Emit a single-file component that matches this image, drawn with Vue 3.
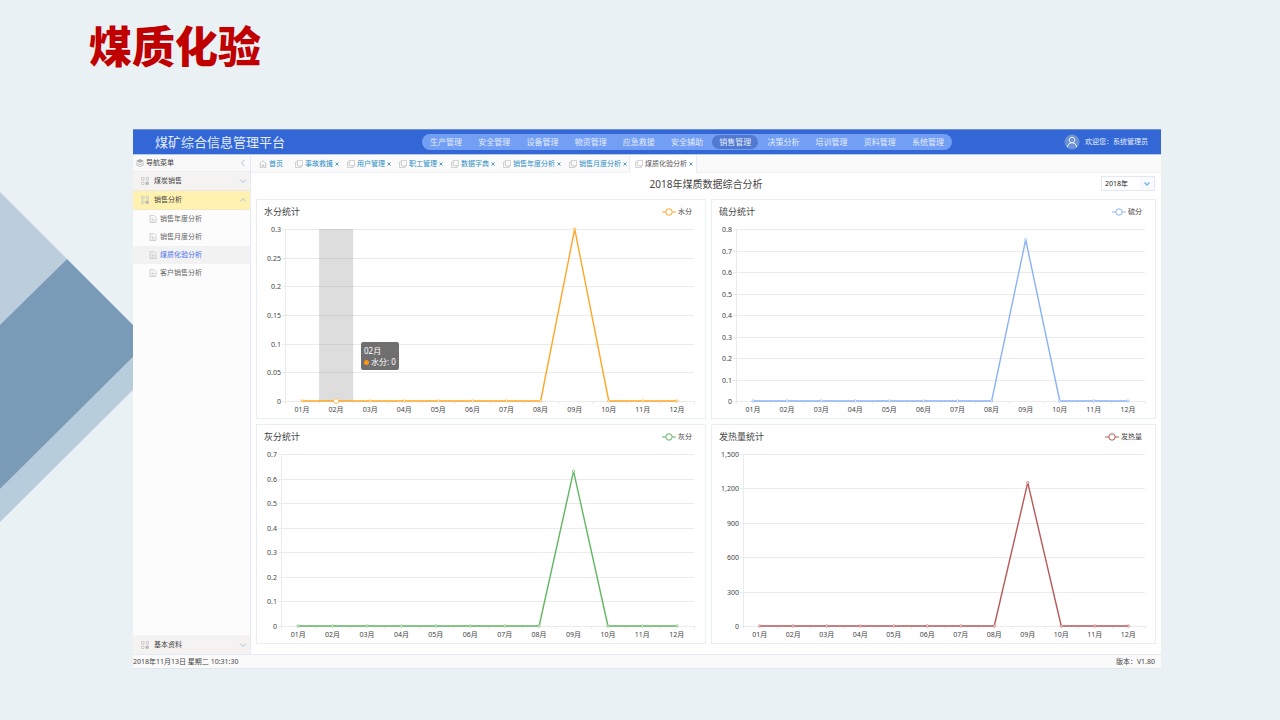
<script setup>
import { ref } from 'vue'

const modules = ['生产管理', '安全管理', '设备管理', '物资管理', '应急救援', '安全辅助', '销售管理', '决策分析', '培训管理', '资料管理', '系统管理']
const activeModule = ref('销售管理')

const tabs = ['事故救援', '用户管理', '职工管理', '数据字典', '销售年度分析', '销售月度分析', '煤质化验分析']
const activeTab = ref('煤质化验分析')

const pages = ['销售年度分析', '销售月度分析', '煤质化验分析', '客户销售分析']
const activePage = ref('煤质化验分析')
const year = ref('2018年')

const TOP = 4
const BOTTOM = 176

function makeChart({ title, name, color, width, left, right, labels, peak, max, hover }) {
  const band = (right - left) / 12
  const points = Array.from({ length: 12 }, (_, i) => ({
    x: left + band * (i + 0.5),
    y: i === 8 ? BOTTOM - (peak / max) * (BOTTOM - TOP) : BOTTOM,
    label: String(i + 1).padStart(2, '0') + '月',
  }))
  const grid = labels.map((text, i) => ({
    text,
    y: Math.round(BOTTOM - (i / (labels.length - 1)) * (BOTTOM - TOP)),
  }))
  const ticks = Array.from({ length: 13 }, (_, i) => Math.round(left + band * i))
  return {
    title, name, color, width, left, right, band, points, grid, ticks, hover,
    line: points.map((p) => `${p.x},${p.y}`).join(' '),
  }
}

const charts = [
  makeChart({ title: '水分统计', name: '水分', color: '#ffa726', width: 448, left: 28, right: 437, labels: ['0', '0.05', '0.1', '0.15', '0.2', '0.25', '0.3'], peak: 0.3, max: 0.3, hover: 1 }),
  makeChart({ title: '硫分统计', name: '硫分', color: '#8ab2f4', width: 443, left: 24, right: 433, labels: ['0', '0.1', '0.2', '0.3', '0.4', '0.5', '0.6', '0.7', '0.8'], peak: 0.75, max: 0.8 }),
  makeChart({ title: '灰分统计', name: '灰分', color: '#62b562', width: 448, left: 24, right: 437, labels: ['0', '0.1', '0.2', '0.3', '0.4', '0.5', '0.6', '0.7'], peak: 0.63, max: 0.7 }),
  makeChart({ title: '发热量统计', name: '发热量', color: '#b75a58', width: 443, left: 31, right: 433, labels: ['0', '300', '600', '900', '1,200', '1,500'], peak: 1250, max: 1500 }),
]
</script>

<template>
  <div class="slide">
    <svg class="deco" viewBox="0 0 160 340" aria-hidden="true">
      <polygon points="0,2 67,69 0,136" fill="#bccddc" />
      <polygon points="0,299 160,140 160,173 0,332" fill="#b7cddc" />
      <polygon points="67,69 149,151 0,299 0,135" fill="#799bb7" />
    </svg>

    <h1>煤质化验</h1>

    <div class="app">
      <header class="topbar">
        <div class="brand">煤矿综合信息管理平台</div>
        <nav class="modules">
          <button
            v-for="m in modules" :key="m" type="button"
            :class="{ on: m === activeModule }" @click="activeModule = m"
          >{{ m }}</button>
        </nav>
        <div class="user">
          <svg class="avatar" viewBox="0 0 16 16" aria-hidden="true">
            <circle cx="8" cy="8" r="7.5" fill="#6e93d3" />
            <circle cx="8" cy="6" r="2.8" fill="none" stroke="#e6effc" />
            <path d="M3.400 13C3.800 10.200 5.400 8.800 8 8.800s4.200 1.400 4.600 4.200" fill="none" stroke="#e6effc" />
          </svg>
          <span>欢迎您：系统管理员</span>
        </div>
      </header>

      <div class="body">
        <aside class="side">
          <div class="side-head">
            <svg class="layers" viewBox="0 0 8 8" aria-hidden="true">
              <path d="M4 0L8 2 4 4 0 2z" fill="#aaa" />
              <path d="M0 3.800L4 5.800 8 3.800M0 5.600L4 7.600 8 5.600" fill="none" stroke="#b5b5b5" stroke-width=".8" />
            </svg>
            <span>导航菜单</span>
            <svg class="chev" viewBox="0 0 8 8" aria-hidden="true"><path d="M5.500 .8L2.500 4l3 3.200" /></svg>
          </div>
          <button v-for="g in ['煤炭销售', '销售分析']" :key="g" type="button" class="group" :class="{ open: g === '销售分析' }">
            <svg class="grid-ico" viewBox="0 0 8 8" aria-hidden="true">
              <path d="M.5 .5h2.500v2.500H.5zM5 .5h2.500v2.500H5zM.5 5h2.500v2.500H.5z" fill="none" stroke="#c4c4c4" stroke-width=".8" />
              <rect x="4.600" y="4.600" width="3.200" height="3.200" fill="#b8b8b8" />
            </svg>
            <span>{{ g }}</span>
            <svg class="chev" viewBox="0 0 8 8" aria-hidden="true">
              <path :d="g === '销售分析' ? 'M1 5.500L4 2.500l3 3' : 'M1 2.500L4 5.500l3-3'" />
            </svg>
          </button>
          <a v-for="p in pages" :key="p" href="#" class="page" :class="{ on: p === activePage }" @click.prevent="activePage = p">
            <svg class="doc" viewBox="0 0 8 8" aria-hidden="true">
              <path d="M1 .5h4L7 2.500v5H1zM2.500 3h1.500M2.500 4.500h3M2.500 6h3" fill="none" stroke="#c4c4c4" stroke-width=".8" />
            </svg>
            <span>{{ p }}</span>
          </a>
          <button type="button" class="group last">
            <svg class="grid-ico" viewBox="0 0 8 8" aria-hidden="true">
              <path d="M.5 .5h2.500v2.500H.5zM5 .5h2.500v2.500H5zM.5 5h2.500v2.500H.5z" fill="none" stroke="#c4c4c4" stroke-width=".8" />
              <rect x="4.600" y="4.600" width="3.200" height="3.200" fill="#b8b8b8" />
            </svg>
            <span>基本资料</span>
            <svg class="chev" viewBox="0 0 8 8" aria-hidden="true"><path d="M1 2.500L4 5.500l3-3" /></svg>
          </button>
        </aside>

        <main>
          <div class="tabs">
            <button type="button" class="tab home">
              <svg viewBox="0 0 8 8" aria-hidden="true">
                <path d="M.4 4L4 .6 7.600 4M1.300 3.400v4.200h1.900V5h1.600v2.600h1.900V3.400" fill="none" stroke="#b5b5b5" stroke-width=".7" />
              </svg>
              <span>首页</span>
            </button>
            <button
              v-for="t in tabs" :key="t" type="button" class="tab"
              :class="{ on: t === activeTab }" @click="activeTab = t"
            >
              <svg viewBox="0 0 8 8" aria-hidden="true">
                <path d="M2.300 .4h5.300v5.300H2.300zM2.300 2H.5v5.600h5.600V5.700" fill="none" stroke="#bdbdbd" stroke-width=".7" />
              </svg>
              <span>{{ t }}</span>
              <svg class="close" viewBox="0 0 4 8" aria-hidden="true">
                <path d="M.5 2.500l3 3M3.500 2.500l-3 3" stroke="#4a8fc0" stroke-width=".9" />
              </svg>
            </button>
          </div>

          <div class="heading">
            <h2>2018年煤质数据综合分析</h2>
            <div class="picker">
              <select v-model="year" aria-label="年份">
                <option>2018年</option>
                <option>2017年</option>
              </select>
              <svg viewBox="0 0 14 13" aria-hidden="true">
                <rect width="14" height="13" fill="#f8f9fa" />
                <path d="M4.500 5.500L7 8l2.500-2.500" fill="none" stroke="#6db5e0" stroke-width="1.300" />
              </svg>
            </div>
          </div>

          <div class="panels">
            <section v-for="c in charts" :key="c.title" class="panel">
              <div class="panel-head">
                <h3>{{ c.title }}</h3>
                <div class="legend">
                  <svg viewBox="0 0 14 8" aria-hidden="true" :stroke="c.color">
                    <path d="M0 4h14" />
                    <circle cx="7" cy="4" r="3.200" fill="#fff" />
                  </svg>
                  <span>{{ c.name }}</span>
                </div>
              </div>
              <div class="plot">
                <svg :viewBox="`0 0 ${c.width} 193`" role="img" :aria-label="c.title">
                  <g class="grid">
                    <path v-for="g in c.grid" :key="g.text" :d="`M${c.left - 3} ${g.y + 0.5}H${c.right}`" />
                    <path :d="`M${c.left + 0.5} 4V176`" />
                    <path v-for="t in c.ticks" :key="t" :d="`M${t + 0.5} 176v3`" />
                  </g>
                  <rect
                    v-if="c.hover" :x="c.left + c.band * c.hover" y="4" :width="c.band" height="172"
                    fill="#969696" fill-opacity=".32"
                  />
                  <text v-for="g in c.grid" :key="g.text" :x="c.left - 4" :y="g.y + 3" text-anchor="end">{{ g.text }}</text>
                  <text v-for="p in c.points" :key="p.label" :x="p.x" y="187" text-anchor="middle">{{ p.label }}</text>
                  <g fill="none" :stroke="c.color">
                    <polyline :points="c.line" stroke-width="1.400" stroke-linejoin="round" />
                    <circle
                      v-for="(p, i) in c.points" :key="p.label" :cx="p.x" :cy="p.y"
                      :r="c.hover && c.hover === i ? 2.5 : 1.2" fill="#fff" stroke-width=".7"
                    />
                  </g>
                </svg>
                <div v-if="c.hover" class="tip">
                  <div>02月</div>
                  <div><i></i>水分: 0</div>
                </div>
              </div>
            </section>
          </div>
        </main>
      </div>

      <footer>
        <span>2018年11月13日 星期二 10:31:30</span>
        <span>版本：V1.80</span>
      </footer>
    </div>
  </div>
</template>

<style>
body {
  margin: 0;
  background: #e9f1f5;
}
</style>

<style scoped>
* {
  box-sizing: border-box;
}
.slide {
  position: relative;
  display: flex;
  flex-direction: column;
  min-height: 100vh;
  padding: 14px 119px 51px 133px;
  font-family: "Noto Sans", "Noto Sans CJK SC", sans-serif;
  font-size: 7px;
  line-height: 10px;
  color: #444;
}
.deco {
  position: absolute;
  left: 0;
  top: 190px;
  width: 160px;
  height: 340px;
}
h1, h2, h3 {
  margin: 0;
  font-weight: 400;
}
h1 {
  margin: 0 0 55px -44px;
  font-family: "Noto Sans CJK SC", sans-serif;
  font-size: 43px;
  line-height: 60px;
  font-weight: 900;
  color: #c00000;
}
button {
  border: 0;
  padding: 0;
  background: none;
  font: inherit;
  color: inherit;
  white-space: nowrap;
}
.app {
  position: relative;
  flex: 1;
  display: flex;
  flex-direction: column;
  background: #fff;
}
.topbar {
  display: grid;
  grid-template-columns: 289fr 530fr 209fr;
  align-items: center;
  height: 26px;
  border-top: 1px solid #6a8fd0;
  border-bottom: 1px solid #b4cbf0;
  background: #3367d6;
  color: #e4edfc;
}
.brand {
  padding-left: 22px;
  font-size: 13px;
  line-height: 20px;
}
.modules {
  display: flex;
  height: 16px;
  padding: 1px 0;
  border-radius: 8px;
  background: #729ef3;
  font-size: 8px;
}
.modules button {
  flex: 1;
  margin: 0 1px;
  border-radius: 7px;
  line-height: 14px;
}
.modules .on {
  background: #5079cf;
}
.user {
  display: flex;
  align-items: center;
  justify-content: flex-end;
  gap: 5px;
  padding-right: 13px;
}
.avatar {
  width: 16px;
  height: 16px;
}
.body {
  flex: 1;
  display: flex;
}
.side {
  display: flex;
  flex-direction: column;
  width: 118px;
  border-right: 1px solid #e4eaf2;
  background: #fcfcfc;
}
.side-head {
  display: flex;
  align-items: center;
  gap: 2px;
  height: 17px;
  padding: 0 3px;
  background: #f9f9f9;
  border-bottom: 1px solid #eee;
}
.side-head span {
  flex: 1;
}
.layers, .chev, .grid-ico, .doc {
  width: 8px;
  height: 8px;
}
.chev {
  fill: none;
  stroke: #a9c3de;
  stroke-width: 1;
}
.group {
  display: flex;
  align-items: center;
  gap: 5px;
  height: 19px;
  padding: 0 3px 0 8px;
  background: #f4f3f2;
  border-bottom: 1px solid #e8e8e8;
  text-align: left;
}
.group span {
  flex: 1;
}
.open {
  background: #fff2b0;
  border-color: #f0e9c4;
}
.last {
  margin-top: auto;
  border: 0;
}
.page {
  display: flex;
  align-items: center;
  gap: 3px;
  height: 18px;
  padding-left: 16px;
  color: #666;
  text-decoration: none;
}
.page.on {
  background: #f2f2f2;
  color: #4a6ff0;
}
main {
  flex: 1;
  min-width: 0;
}
.tabs {
  display: flex;
  height: 18px;
  padding-left: 3px;
  background: #fafafa;
  border-bottom: 1px solid #eff1f5;
  color: #2d8fc6;
}
.tab {
  display: flex;
  align-items: center;
  gap: 2px;
  padding: 0 3px 0 5px;
}
.tab.home {
  padding-right: 7px;
}
.tab svg {
  width: 8px;
  height: 8px;
}
.tab .close {
  width: 4px;
}
.tab.on {
  height: 18px;
  background: #fff;
  box-shadow: -1px 0 #e9edf3, 1px 0 #e9edf3;
  color: #555;
}
.heading {
  position: relative;
  display: flex;
  align-items: center;
  justify-content: center;
  height: 26px;
  padding-bottom: 4px;
}
h2 {
  font-size: 10px;
  line-height: 16px;
}
.picker {
  position: absolute;
  top: 3px;
  right: 6px;
  width: 54px;
  height: 15px;
  border: 1px solid #e4e9f1;
}
.picker select {
  display: block;
  width: 100%;
  height: 13px;
  padding: 0 3px;
  border: 0;
  appearance: none;
  background: #fff;
  font: inherit;
  line-height: 13px;
  color: #222;
}
.picker svg {
  position: absolute;
  top: 0;
  right: 0;
  width: 14px;
  height: 13px;
  pointer-events: none;
}
.panels {
  display: grid;
  grid-template-columns: 450fr 445fr;
  gap: 5px;
  padding: 0 5px 10px 5px;
}
.panel {
  border: 1px solid #e9eef5;
}
.panel-head {
  display: flex;
  justify-content: space-between;
  align-items: center;
  height: 25px;
  padding: 0 13px 2px 7px;
}
h3 {
  font-size: 9px;
  line-height: 14px;
}
.legend {
  display: flex;
  align-items: center;
  gap: 2px;
}
.legend svg {
  width: 14px;
  height: 8px;
}
.plot {
  position: relative;
}
.plot svg {
  display: block;
  width: 100%;
  height: auto;
}
.plot text {
  fill: #444;
  font-size: 7px;
}
.grid {
  fill: none;
  stroke: #ebebeb;
}
.tip {
  position: absolute;
  left: 104px;
  top: 117px;
  padding: 3px;
  border-radius: 2px;
  background: #6f6f6f;
  color: #fff;
  font-size: 8px;
  line-height: 11px;
  white-space: nowrap;
}
.tip i {
  display: inline-block;
  width: 5px;
  height: 5px;
  margin-right: 2px;
  border-radius: 50%;
  background: #ff9413;
}
footer {
  display: flex;
  justify-content: space-between;
  align-items: center;
  height: 15px;
  padding-right: 6px;
  border-top: 1px solid #e6eaf3;
  border-bottom: 1px solid #e0e6f0;
  background: #fafafa;
}
</style>
